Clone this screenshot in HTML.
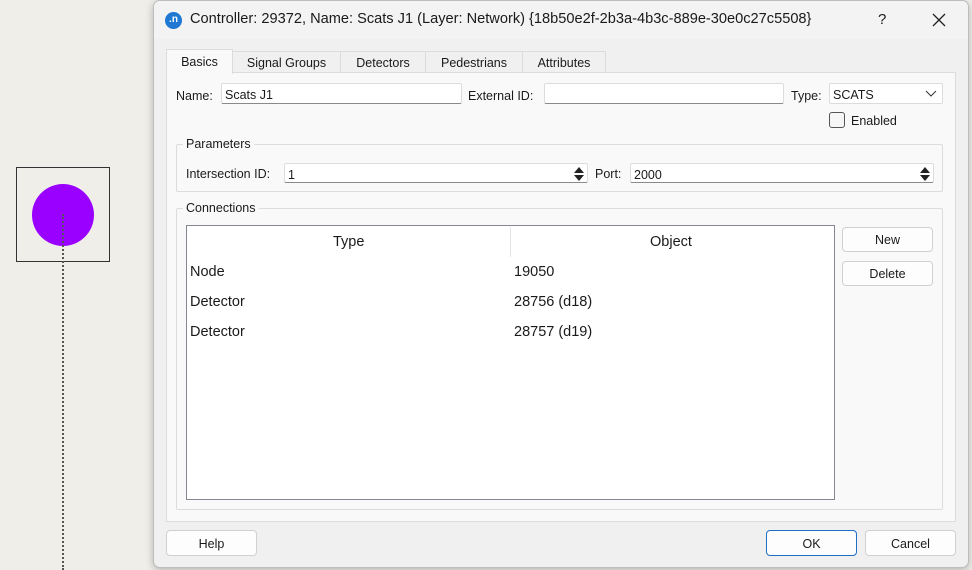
<!DOCTYPE html>
<html><head><meta charset="utf-8"><style>
*{box-sizing:border-box;margin:0;padding:0}
body{width:972px;height:570px;overflow:hidden;background:#f0eee9;font-family:"Liberation Sans",sans-serif;position:relative;color:#1a1a1a}
.a{position:absolute}
.t{font-size:12.5px;white-space:nowrap}
.in{position:absolute;background:#fff;border:1px solid #dcdcdc;border-bottom:1px solid #8a8a8a;border-radius:2px;font-size:12.5px;padding:4px 0 0 3px;}
.btn{position:absolute;background:#fdfdfd;border:1px solid #d0d0d0;border-radius:4px;font-size:12.5px;text-align:center;line-height:26px}
.grp{position:absolute;border:1px solid #dcdcdc;border-radius:2px}
.lg{position:absolute;background:#f9f9f9;padding:0 3px;font-size:12.5px;top:-8px;left:6px}
.tab{position:absolute;top:51px;height:22px;border:1px solid #dcdcdc;background:#f0f0f0;font-size:12.5px;text-align:center;line-height:22px}
.spin{position:absolute;right:2px;top:2px;width:12px;height:16px}
.r{position:absolute;font-size:14.5px}
</style></head><body>
<div class="a" style="left:16px;top:167px;width:94px;height:95px;border:1px solid #333"></div>
<div class="a" style="left:32px;top:184px;width:62px;height:62px;border-radius:50%;background:#9900ff"></div>
<div class="a" style="left:62px;top:214px;width:0;height:356px;border-left:2px dotted #555"></div>

<div class="a" style="left:153px;top:0;width:816px;height:568px;background:#f0f0f0;border:1px solid #bdbdbd;border-radius:7px;box-shadow:0 2px 8px rgba(0,0,0,.25);overflow:hidden">
 <div class="a" style="left:0;top:0;width:816px;height:38px;background:#f3f3f3"></div>
 <div class="a" style="left:11px;top:11px;width:17px;height:17px;border-radius:50%;background:#1f78d1;color:#fff;font-size:10px;font-weight:bold;text-align:center;line-height:15px">.n</div>
 <div class="a" style="left:36px;top:10px;font-size:14.6px;white-space:nowrap">Controller: 29372, Name: Scats J1 (Layer: Network) {18b50e2f-2b3a-4b3c-889e-30e0c27c5508}</div>
 <div class="a" style="left:724px;top:10px;font-size:15px">?</div>
 <svg class="a" style="left:778px;top:12px" width="14" height="14"><path d="M1 1L13 13M13 1L1 13" stroke="#222" stroke-width="1.3"/></svg>
</div>
<div class="a" style="left:166px;top:72px;width:790px;height:450px;background:#f9f9f9;border:1px solid #dcdcdc"></div>
<div class="tab" style="left:232px;width:109px">Signal Groups</div>
<div class="tab" style="left:340px;width:86px">Detectors</div>
<div class="tab" style="left:425px;width:98px">Pedestrians</div>
<div class="tab" style="left:522px;width:84px">Attributes</div>
<div class="tab" style="left:166px;top:49px;height:25px;width:67px;background:#f9f9f9;border-bottom:none;line-height:24px">Basics</div>

<div class="a t" style="left:176px;top:89px">Name:</div>
<div class="in" style="left:221px;top:83px;width:241px;height:21px">Scats J1</div>
<div class="a t" style="left:468px;top:89px">External ID:</div>
<div class="in" style="left:544px;top:83px;width:240px;height:21px"></div>
<div class="a t" style="left:791px;top:89px">Type:</div>
<div class="in" style="left:829px;top:83px;width:114px;height:21px;border-bottom-color:#dcdcdc">SCATS</div>
<svg class="a" style="left:925px;top:90px" width="12" height="8"><path d="M1 1L6 6L11 1" stroke="#333" fill="none"/></svg>
<div class="a" style="left:829px;top:112px;width:16px;height:16px;border:1px solid #555;border-radius:3px;background:#f6f6f6"></div>
<div class="a t" style="left:851px;top:114px">Enabled</div>

<div class="grp" style="left:176px;top:144px;width:767px;height:48px"><div class="lg">Parameters</div></div>
<div class="a t" style="left:186px;top:167px">Intersection ID:</div>
<div class="in" style="left:284px;top:163px;width:304px;height:20px">1<svg class="spin" viewBox="0 0 12 16"><path d="M1 7L6 1L11 7Z M1 9L6 15L11 9Z" fill="#222"/></svg></div>
<div class="a t" style="left:595px;top:167px">Port:</div>
<div class="in" style="left:630px;top:163px;width:304px;height:20px">2000<svg class="spin" viewBox="0 0 12 16"><path d="M1 7L6 1L11 7Z M1 9L6 15L11 9Z" fill="#222"/></svg></div>

<div class="grp" style="left:176px;top:208px;width:767px;height:302px"><div class="lg">Connections</div></div>
<div class="a" style="left:186px;top:225px;width:649px;height:275px;background:#fff;border:1px solid #828790"></div>
<div class="a" style="left:510px;top:227px;width:1px;height:30px;background:#e5e5e5"></div>
<div class="r" style="left:333px;top:234px">Type</div>
<div class="r" style="left:650px;top:234px">Object</div>
<div class="r" style="left:190px;top:264px">Node</div>
<div class="r" style="left:514px;top:264px">19050</div>
<div class="r" style="left:190px;top:294px">Detector</div>
<div class="r" style="left:514px;top:294px">28756 (d18)</div>
<div class="r" style="left:190px;top:324px">Detector</div>
<div class="r" style="left:514px;top:324px">28757 (d19)</div>

<div class="btn" style="left:842px;top:227px;width:91px;height:25px;line-height:25px">New</div>
<div class="btn" style="left:842px;top:261px;width:91px;height:25px;line-height:25px">Delete</div>
<div class="btn" style="left:166px;top:530px;width:91px;height:26px">Help</div>
<div class="btn" style="left:766px;top:530px;width:91px;height:26px;border-color:#1f6fc5">OK</div>
<div class="btn" style="left:865px;top:530px;width:91px;height:26px">Cancel</div>
</body></html>
